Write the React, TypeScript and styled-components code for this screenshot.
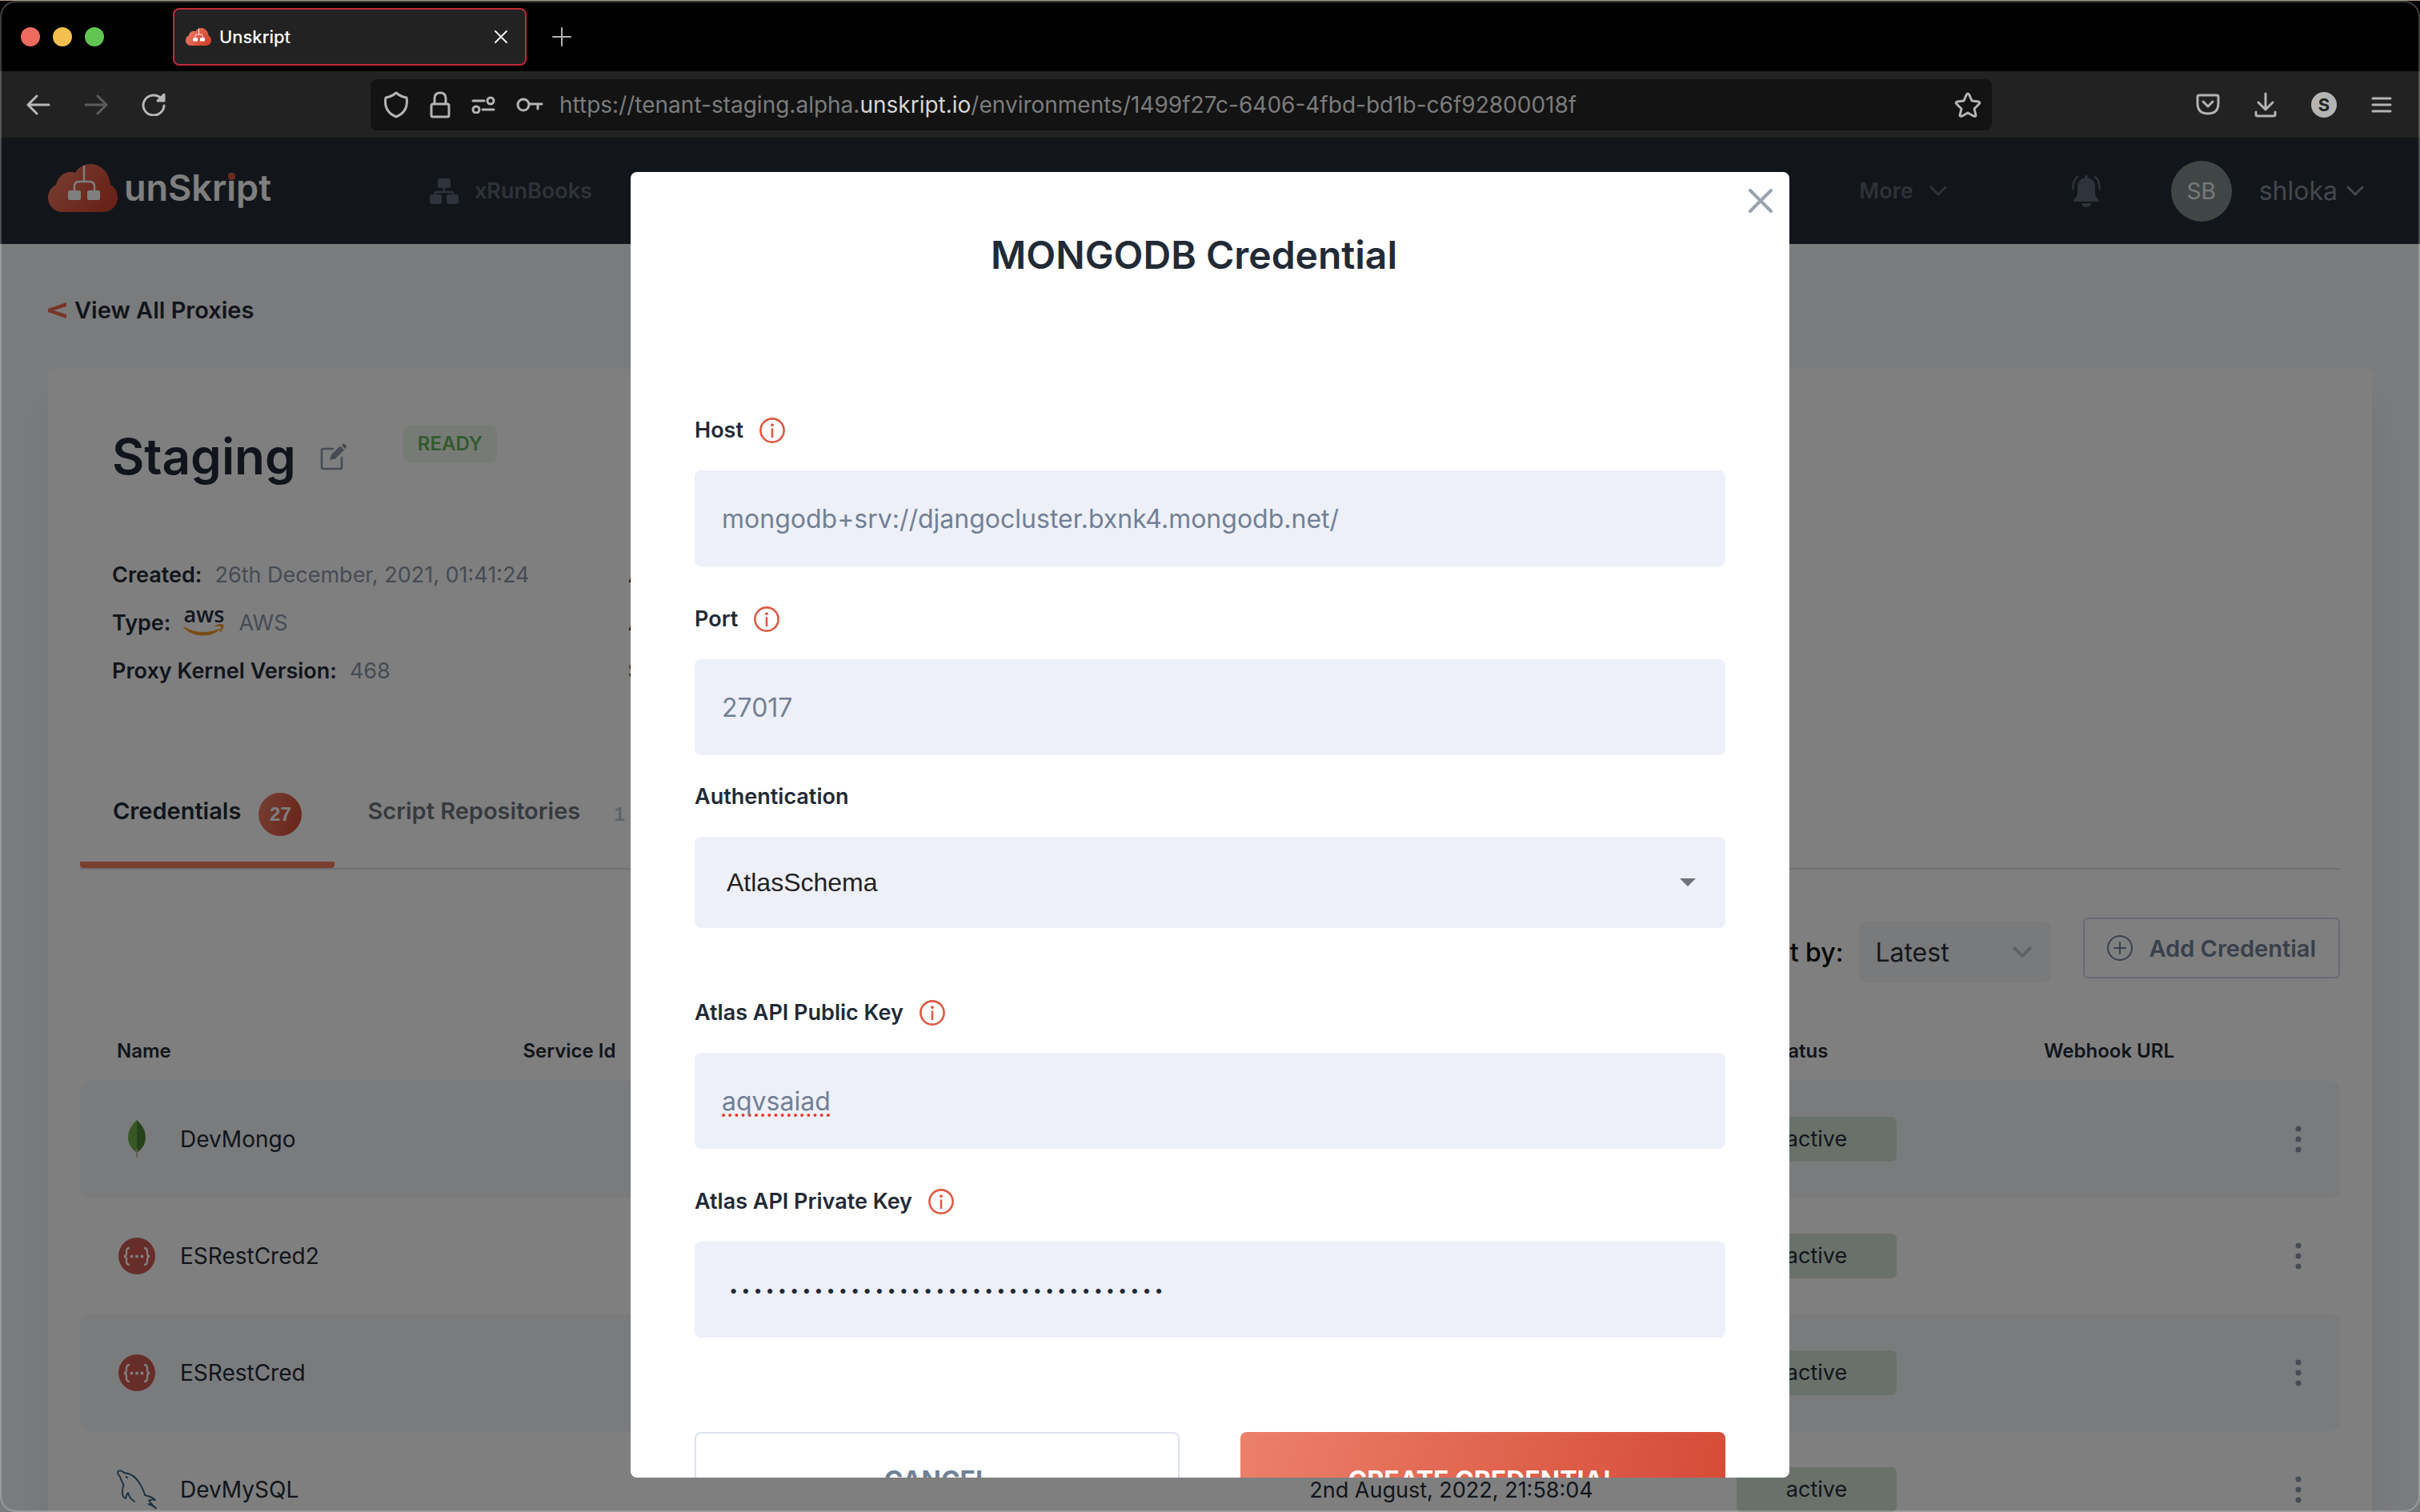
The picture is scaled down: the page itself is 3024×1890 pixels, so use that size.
import React from "react";
import styled, { createGlobalStyle } from "styled-components";

const SANS = `Inter, "Open Sans", sans-serif`;
const HELV = `"Liberation Sans", Arial, sans-serif`;

const GlobalStyle = createGlobalStyle`
  *, *::before, *::after { box-sizing: border-box; }
  html, body { margin: 0; background: #0c0c0c; }
  body { font-family: ${SANS}; color: #222a36; }
  button, input, select { font-family: inherit; margin: 0; }
  button { padding: 0; border: 0; background: none; color: inherit; cursor: pointer; }
  a { color: inherit; text-decoration: none; }
  svg { display: block; flex: none; }
`;

/* ---------- browser window ---------- */

const Browser = styled.div`
  position: relative;
  display: flex;
  flex-direction: column;
  height: 100vh;
  overflow: hidden;
  background: #000;
  border-top: 1px solid #a89a8a;
  &::after {
    content: "";
    position: absolute;
    inset: 0;
    border: 2px solid rgba(255, 255, 255, 0.24);
    border-radius: 20px;
    pointer-events: none;
  }
`;

const TitleBar = styled.div`
  display: flex;
  align-items: center;
  flex: none;
  height: 88px;
  padding: 2px 26px 0;
`;

const Lights = styled.div`
  display: flex;
  gap: 16px;
  margin-right: 86px;
`;

const Light = styled.button<{ $color: string }>`
  width: 24px;
  height: 24px;
  border-radius: 50%;
  background: ${(p) => p.$color};
`;

const BrowserTab = styled.div`
  display: flex;
  align-items: center;
  gap: 10px;
  width: 442px;
  height: 72px;
  padding: 0 22px 0 14px;
  border: 2px solid #c32a3c;
  border-radius: 8px;
  background: #222;
  color: #fff;
  font-size: 22px;
  font-weight: 500;
`;

const Spacer = styled.div`
  flex: 1;
`;

const IconButton = styled.button<{ $color?: string }>`
  display: flex;
  align-items: center;
  justify-content: center;
  color: ${(p) => p.$color ?? "#b4b4b4"};
`;

const NewTab = styled(IconButton)`
  margin-left: 32px;
`;

const NavBar = styled.div`
  display: flex;
  align-items: center;
  flex: none;
  height: 83px;
  padding: 0 35px 0 33px;
  background: #222;
`;

const NavGroup = styled.div`
  display: flex;
  align-items: center;
  gap: 42px;
  width: 430px;
`;

const AddressBar = styled.div`
  display: flex;
  align-items: center;
  gap: 20px;
  flex: 1;
  height: 64px;
  margin-right: 255px;
  padding: 0 13px 0 16px;
  border-radius: 8px;
  background: #131313;
  color: #b4b4b4;
`;

const SiteIcons = styled.div`
  display: flex;
  align-items: center;
  gap: 26px;
`;

const Url = styled.div`
  flex: 1;
  color: #7c7c7c;
  font-size: 28px;
  white-space: nowrap;
  b {
    color: #d6d6d6;
    font-weight: 400;
  }
`;

const Tools = styled.div`
  display: flex;
  align-items: center;
  gap: 43px;
`;

const Account = styled.span`
  display: flex;
  align-items: center;
  justify-content: center;
  width: 32px;
  height: 32px;
  border-radius: 50%;
  background: #b4b4b4;
  color: #222;
  font-size: 22px;
  font-weight: 700;
`;

/* ---------- application page ---------- */

const Viewport = styled.div`
  position: relative;
  flex: 1;
  min-height: 0;
  overflow: hidden;
  background: #f5f7fa;
`;

const Page = styled.div`
  display: flex;
  flex-direction: column;
  height: 100%;
`;

const Header = styled.header`
  display: flex;
  align-items: center;
  flex: none;
  height: 133px;
  padding: 0 70px 0 60px;
  background: #242c36;
  color: #5e6472;
  font-size: 27px;
  font-weight: 600;
`;

const Brand = styled.a`
  display: flex;
  align-items: center;
  gap: 8px;
  width: 477px;
  padding-bottom: 8px;
  color: #fff;
  font-size: 45px;
  font-weight: 600;
`;

const DottedLetter = styled.span`
  position: relative;
  &::after {
    content: "";
    position: absolute;
    left: 50%;
    top: 9px;
    width: 9px;
    height: 9px;
    margin-left: -4px;
    border-radius: 50%;
    background: #e0523a;
  }
`;

const NavLink = styled.a`
  display: flex;
  align-items: center;
  gap: 20px;
`;

const HeaderMenu = styled.button<{ $gap: number; $large?: boolean }>`
  display: flex;
  align-items: center;
  gap: ${(p) => p.$gap}px;
  font-size: ${(p) => (p.$large ? 32 : 27)}px;
  font-weight: ${(p) => (p.$large ? 400 : 600)};
  color: ${(p) => (p.$large ? "#888e99" : "#5e6472")};
`;

const Bell = styled(IconButton)`
  margin: 0 88px 0 156px;
`;

const Avatar = styled.span`
  display: flex;
  align-items: center;
  justify-content: center;
  width: 76px;
  height: 76px;
  margin-right: 34px;
  border-radius: 50%;
  background: #808c8a;
  color: #f0f4f4;
  font-size: 28px;
  font-weight: 400;
`;

const Content = styled.main`
  display: flex;
  flex-direction: column;
  flex: 1;
  padding: 63px 60px 0;
`;

const BackLink = styled.a`
  display: flex;
  align-items: center;
  gap: 10px;
  align-self: flex-start;
  margin-bottom: 53px;
  font-size: 29px;
  line-height: 40px;
  font-weight: 600;
`;

const Card = styled.section`
  flex: 1;
  padding: 70px 40px 0;
  border-radius: 6px;
  background: #fff;
  box-shadow: 0 40px 50px rgba(34, 42, 54, 0.06);
`;

const TitleRow = styled.div`
  display: flex;
  padding-left: 40px;
`;

const PageTitle = styled.h1`
  margin: 0 30px 0 0;
  font-size: 62px;
  line-height: 80px;
  font-weight: 600;
`;

const EditButton = styled(IconButton)`
  height: 80px;
  margin-right: 70px;
`;

const ReadyTag = styled.span`
  height: 48px;
  padding: 0 18px;
  border-radius: 8px;
  background: #eef6eb;
  color: #66b561;
  font-size: 24px;
  line-height: 48px;
  font-weight: 600;
`;

const Meta = styled.dl`
  display: grid;
  grid-template-columns: 645px 1fr;
  margin: 78px 0 122px;
  padding-left: 40px;
  font-size: 27px;
  line-height: 60px;
`;

const MetaItem = styled.div`
  display: flex;
  align-items: center;
  height: 60px;
  gap: 16px;
  dt {
    font-weight: 600;
  }
  dd {
    display: flex;
    align-items: center;
    gap: 18px;
    margin: 0;
    color: #8c97a8;
  }
`;

const AwsMark = styled.span`
  display: flex;
  flex-direction: column;
  align-items: center;
  padding-bottom: 6px;
  color: #252f3e;
  font-family: "Open Sans", sans-serif;
  font-size: 27px;
  line-height: 22px;
  font-weight: 600;
`;

const Tabs = styled.div`
  display: flex;
  border-bottom: 2px solid #dcdfee;
`;

const Tab = styled.button<{ $active?: boolean }>`
  display: flex;
  align-items: flex-start;
  gap: 22px;
  padding: 0 41px 32px;
  border-bottom: 8px solid ${(p) => (p.$active ? "#f4805f" : "transparent")};
  border-radius: 4px;
  color: ${(p) => (p.$active ? "#222a36" : "#6e747e")};
  font-size: 29px;
  line-height: 46px;
  font-weight: 600;
`;

const Count = styled.span<{ $active?: boolean }>`
  width: 54px;
  height: 54px;
  border-radius: 50%;
  background: ${(p) => (p.$active ? "linear-gradient(110deg, #ec8068, #d44630)" : "none")};
  color: ${(p) => (p.$active ? "#fff" : "#bcc4cc")};
  font-family: ${HELV};
  font-size: 24px;
  line-height: 54px;
`;

const Controls = styled.div`
  display: flex;
  justify-content: flex-end;
  height: 81px;
  margin: 60px 0 48px;
`;

const SortLabel = styled.label`
  display: flex;
  align-items: center;
  align-self: flex-end;
  gap: 20px;
  height: 76px;
  margin-right: 40px;
  color: #000;
  font-size: 32px;
  font-weight: 500;
`;

const SelectWrap = styled.span<{ $width: string }>`
  display: grid;
  align-items: center;
  width: ${(p) => p.$width};
  & > * {
    grid-area: 1 / 1;
  }
  & > svg {
    justify-self: end;
    pointer-events: none;
  }
`;

const SortSelect = styled.select`
  appearance: none;
  width: 100%;
  height: 76px;
  padding: 0 20px;
  border: 0;
  border-radius: 8px;
  background: #f2f4f9;
  color: #2c2f35;
  font-size: 32px;
`;

const SortArrow = styled.svg`
  margin-right: 24px;
`;

const AddButton = styled.button`
  display: flex;
  align-items: center;
  align-self: flex-start;
  gap: 20px;
  height: 76px;
  padding: 0 28px;
  border: 2px solid #cfd4e6;
  border-radius: 6px;
  color: #718096;
  font-size: 29px;
  font-weight: 600;
`;

const Table = styled.table`
  width: 100%;
  table-layout: fixed;
  border-spacing: 0;
  text-align: left;
  font-size: 27px;
`;

const Col = styled.col<{ $width: string }>`
  width: ${(p) => p.$width};
`;

const HeadCell = styled.th<{ $inset?: number }>`
  height: 75px;
  padding: 0 0 0 ${(p) => p.$inset ?? 0}px;
  font-size: 24px;
  font-weight: 600;
`;

const Row = styled.tr`
  &:nth-child(odd) td {
    background: #f4f7fb;
  }
`;

const Cell = styled.td`
  height: 146px;
  padding: 0;
  white-space: nowrap;
  &:first-child {
    border-radius: 10px 0 0 10px;
  }
  &:last-child {
    border-radius: 0 10px 10px 0;
  }
`;

const NameCell = styled.div`
  display: flex;
  align-items: center;
  gap: 31px;
  padding-left: 48px;
  font-size: 28px;
`;

const IconSlot = styled.span`
  display: flex;
  justify-content: center;
  width: 46px;
`;

const Status = styled.span`
  display: block;
  width: 200px;
  height: 56px;
  border-radius: 6px;
  background: #d5e3d5;
  line-height: 56px;
  text-align: center;
`;

/* ---------- dialog ---------- */

const Backdrop = styled.div`
  position: absolute;
  inset: 0;
  display: flex;
  justify-content: center;
  padding: 43px 0;
  background: rgba(0, 0, 0, 0.5);
`;

const Dialog = styled.div`
  position: relative;
  width: 100%;
  max-width: 1448px;
  overflow: hidden;
  padding: 74px 80px 0;
  border-radius: 8px;
  background: #fff;
`;

const CloseButton = styled(IconButton)`
  position: absolute;
  top: 20px;
  right: 20px;
`;

const DialogTitle = styled.h2`
  margin: 0 0 173px;
  padding-right: 40px;
  font-size: 48px;
  line-height: 60px;
  font-weight: 600;
  text-align: center;
`;

const Field = styled.div<{ $after: number }>`
  display: flex;
  flex-direction: column;
  gap: 34px;
  margin-bottom: ${(p) => p.$after}px;
`;

const FieldLabel = styled.label`
  display: flex;
  align-items: center;
  gap: 20px;
  font-size: 27px;
  line-height: 32px;
  font-weight: 600;
`;

const Input = styled.input<{ $misspelt?: boolean }>`
  width: 100%;
  height: 120px;
  padding: 0 34px;
  border: 0;
  border-radius: 8px;
  background: #edf0f8;
  color: #718096;
  font-size: 32px;
  text-decoration: ${(p) => (p.$misspelt ? "underline dotted #e8382e 4px" : "none")};
  text-underline-offset: 5px;
  text-decoration-skip-ink: none;
  &[type="password"] {
    padding: 0 41px;
    color: #222a36;
    font-size: 27px;
    font-weight: 200;
  }
`;

const AuthSelect = styled.select`
  appearance: none;
  width: 100%;
  height: 114px;
  padding: 0 40px;
  border: 0;
  border-radius: 8px;
  background: #edf0f8;
  color: #222;
  font-family: ${HELV};
  font-size: 32px;
`;

const AuthArrow = styled.svg`
  margin-right: 37px;
`;

const Actions = styled.div`
  display: grid;
  grid-template-columns: 1fr 1fr;
  gap: 76px;
`;

const ActionButton = styled.button<{ $primary?: boolean }>`
  height: 120px;
  border: ${(p) => (p.$primary ? "0" : "2px solid #dde2f0")};
  border-radius: 8px;
  background: ${(p) => (p.$primary ? "linear-gradient(105deg, #ec806a, #d54a35)" : "#fff")};
  color: ${(p) => (p.$primary ? "#fff" : "#718096")};
  font-size: 32px;
  font-weight: 700;
`;

/* ---------- drawings ---------- */

type LineProps = { w: number; h: number; sw?: number; d: string; className?: string };

const Line = ({ w, h, sw = 3, d, className }: LineProps) => (
  <svg className={className} width={w} height={h} viewBox={`0 0 ${w} ${h}`} fill="none" stroke="currentColor" strokeWidth={sw} strokeLinecap="round" strokeLinejoin="round" aria-hidden="true">
    <path d={d} />
  </svg>
);

const Cloud = ({ width, id }: { width: number; id: string }) => (
  <svg width={width} height={(width * 60) / 87} viewBox="0 0 87 60" aria-hidden="true">
    <defs>
      <linearGradient id={id} x1="0" y1="0" x2="1" y2="0.5">
        <stop offset="0" stopColor="#f08268" />
        <stop offset="1" stopColor="#d34530" />
      </linearGradient>
    </defs>
    <path fill={`url(#${id})`} d="M18 60C8 60 0 52 0 42c0-7 4-13 10-16C12 17 19 10 28 10c2 0 5 0 6 1C38 4 45 0 53 0c13 0 24 11 25 26 6 3 9 9 9 16 0 10-8 18-18 18Z" />
    <path d="M45 2v20M33 34v-6q0-6 6-6h13q6 0 6 6v6" fill="none" stroke="#fff" strokeWidth="2.4" />
    <rect x="25" y="33" width="16" height="12" rx="2" fill="#fff" />
    <rect x="49" y="33" width="16" height="12" rx="2" fill="#fff" />
  </svg>
);

const Info = () => (
  <svg width="32" height="32" viewBox="0 0 32 32" fill="none" stroke="#dd5a43" strokeLinecap="round" aria-hidden="true">
    <circle cx="16" cy="16" r="14.6" strokeWidth="2.6" />
    <path d="M16 14.5v9.5" strokeWidth="2.6" />
    <circle cx="16" cy="9.2" r="1.9" fill="#dd5a43" stroke="none" />
  </svg>
);

const Sitemap = () => (
  <svg width="36" height="32" viewBox="0 0 36 32" fill="#5e6677" aria-hidden="true">
    <rect x="10" y="0" width="16" height="12" rx="3" />
    <rect x="0" y="20" width="15" height="12" rx="3" />
    <rect x="21" y="20" width="15" height="12" rx="3" />
    <path d="M18 12v5M7 21v-2q0-2 2-2h18q2 0 2 2v2" fill="none" stroke="#5e6677" strokeWidth="2.4" />
  </svg>
);

const BellIcon = () => (
  <svg width="36" height="40" viewBox="0 0 36 40" fill="#5e6677" aria-hidden="true">
    <path d="M18 0c1.5 0 2 1 2 3.5C26 4 29 9 29 15v7c0 4 2 6 4 8 2 1.5 1 3-1 3H4c-2 0-3-1.5-1-3 2-2 4-4 4-8v-7C7 9 10 4 16 3.5 16 1 16.5 0 18 0Z" />
    <path d="M12 35h12q-1 5-6 5t-6-5Z" />
    <path d="M7 2Q1 7 1.5 17M29 2q6 5 5.5 15" fill="none" stroke="#5e6677" strokeWidth="2.6" strokeLinecap="round" />
  </svg>
);

const EditIcon = () => (
  <svg width="34" height="34" viewBox="0 0 34 34" fill="none" stroke="#8c97a8" strokeWidth="2.6" strokeLinecap="round" aria-hidden="true">
    <path d="M16 7H4q-2 0-2 2v21q0 2 2 2h21q2 0 2-2V18" />
    <path d="M12 21l2-7L25 3.5l5 5L19 19.5Z" fill="#8c97a8" stroke="none" />
    <path d="M27 2.5l1.5-1.5q1-1 2.5.5l1.5 1.5q1 1.5 0 2.500L31 7Z" fill="#8c97a8" stroke="none" />
  </svg>
);

const Smile = () => (
  <svg width="51" height="17" viewBox="0 0 51 17" aria-hidden="true">
    <path d="M0 5.5Q0 4 2 5q20 11 43 2 2-.5 1 1-9 7.500-21 7.500Q11 16 0 5.5Z" fill="#f49a2a" />
    <path d="M40 3q5-3 10-1.500 2 3-3.500 10-1.500.5-1-1Q48 5 47 4.200 45 3.500 41 4q-2 .2-1-1Z" fill="#f49a2a" />
  </svg>
);

const Leaf = () => (
  <svg width="46" height="48" viewBox="0 0 46 48" aria-hidden="true">
    <path d="M23 0q-11 10-11 22 0 11 11 19Z" fill="#6fae4a" />
    <path d="M23 0q11 10 11 22 0 11-11 19Z" fill="#4a8436" />
    <path d="M23 36v11" stroke="#b9b5a6" strokeWidth="1.6" />
  </svg>
);

const Swagger = () => (
  <svg width="46" height="46" viewBox="0 0 46 46" fill="none" stroke="#fff" strokeWidth="2.4" aria-hidden="true">
    <circle cx="23" cy="23" r="23" fill="#cf5a52" stroke="none" />
    <path d="M14 13q-4 0-4 4v3q0 3-3 3.500 3 .5 3 3.500v3q0 4 4 4M32 13q4 0 4 4v3q0 3 3 3.500-3 .5-3 3.500v3q0 4-4 4" />
    <g fill="#fff" stroke="none">
      <circle cx="16.5" cy="23.5" r="2" />
      <circle cx="23" cy="23.5" r="2" />
      <circle cx="29.5" cy="23.5" r="2" />
    </g>
  </svg>
);

const Dolphin = () => (
  <svg width="50" height="50" viewBox="0 0 50 50" fill="none" stroke="#2c5f80" strokeWidth="1.8" strokeLinecap="round" strokeLinejoin="round" aria-hidden="true">
    <path d="M22 40Q16 36 14 29q-2 2-3 7-5-2-4-10 .5-5 1.500-7Q6 15 4 9 1 6 1 3 3 0 7 2.500q2 2 5 2Q22 6 29 18q5 9 6 14 9 2 13 6-4-1-8 .5Q43 43 49 48.500 44 44 39.500 43" />
    <path d="M11.5 8.500l1.500 2" />
  </svg>
);

const Kebab = () => (
  <svg width="8" height="34" viewBox="0 0 8 34" fill="#8c97a8" aria-hidden="true">
    <circle cx="4" cy="4" r="3.5" />
    <circle cx="4" cy="17" r="3.5" />
    <circle cx="4" cy="30" r="3.5" />
  </svg>
);

const ICONS = { leaf: Leaf, swagger: Swagger, dolphin: Dolphin };

type Credential = { name: string; icon: keyof typeof ICONS; created?: string };

const CREDENTIALS: Credential[] = [
  { name: "DevMongo", icon: "leaf" },
  { name: "ESRestCred2", icon: "swagger" },
  { name: "ESRestCred", icon: "swagger" },
  { name: "DevMySQL", icon: "dolphin", created: "2nd August, 2022, 21:58:04" },
];

const BrowserChrome = () => (
  <>
    <TitleBar>
      <Lights>
        <Light $color="#ec6a5e" aria-label="Close window" />
        <Light $color="#f4bf4f" aria-label="Minimize window" />
        <Light $color="#61c554" aria-label="Zoom window" />
      </Lights>
      <BrowserTab>
        <Cloud width={32} id="favicon" />
        Unskript
        <Spacer />
        <IconButton $color="#f0f0f0" aria-label="Close tab">
          <Line w={16} h={16} sw={2} d="M1 1l14 14M15 1L1 15" />
        </IconButton>
      </BrowserTab>
      <NewTab aria-label="New tab">
        <Line w={24} h={24} sw={2} d="M12 1v22M1 12h22" />
      </NewTab>
    </TitleBar>
    <NavBar>
      <NavGroup>
        <IconButton $color="#b8b8b8" aria-label="Back">
          <Line w={30} h={26} d="M2 13h26M13 2L2 13l11 11" />
        </IconButton>
        <IconButton $color="#5c5c5c" aria-label="Forward">
          <Line w={30} h={26} d="M28 13H2M17 2l11 11-11 11" />
        </IconButton>
        <IconButton $color="#b8b8b8" aria-label="Reload">
          <Line w={30} h={28} d="M28 15A13 12.5 0 1 1 22 4l5 5M28 1v8h-8ZM26 3v5h-4" />
        </IconButton>
      </NavGroup>
      <AddressBar>
        <SiteIcons>
          <Line w={32} h={34} d="M16 2Q22 7 29 8c2 12-3 20-13 24C6 28 1 20 3 8q7-1 13-6Z" />
          <Line w={26} h={34} d="M6 16V9q0-7 7-7t7 7v7M4 16h18q2 0 2 2v12q0 2-2 2H4q-2 0-2-2V18q0-2 2-2Z" />
          <Line w={30} h={22} d="M2 6h14M20 6a4 4 0 1 0 8 0 4 4 0 1 0-8 0M28 17H14M2 17a4 4 0 1 0 8 0 4 4 0 1 0-8 0" />
          <Line w={34} h={20} d="M2 10a7 7 0 1 0 14 0 7 7 0 1 0-14 0M16 9h16M27 9v6" />
        </SiteIcons>
        <Url>
          https://tenant-staging.alpha.<b>unskript.io</b>/environments/1499f27c-6406-4fbd-bd1b-c6f92800018f
        </Url>
        <IconButton aria-label="Bookmark this page">
          <Line w={34} h={32} d="M17 2q1 0 2 2l3 7 8 1q3 1 1 3l-6 6 2 8q0 2-3 1l-7-4-7 4q-3 1-3-1l2-8-6-6q-2-2 1-3l8-1 3-7q1-2 2-2Z" />
        </IconButton>
      </AddressBar>
      <Tools>
        <IconButton aria-label="Save to Pocket">
          <Line w={30} h={27} d="M4 2h22q2 0 2 2v8q0 13-13 13T2 12V4q0-2 2-2ZM9 10l6 6 6-6" />
        </IconButton>
        <IconButton aria-label="Downloads">
          <Line w={28} h={32} d="M14 2v20M5 13l9 9 9-9M2 25v3q0 2 2 2h20q2 0 2-2v-3" />
        </IconButton>
        <Account>S</Account>
        <IconButton aria-label="Open menu">
          <Line w={26} h={20} d="M2 2h22M2 10h22M2 18h22" />
        </IconButton>
      </Tools>
    </NavBar>
  </>
);

const AppHeader = () => (
  <Header>
    <Brand href="#">
      <Cloud width={87} id="brand" />
      <span>
        unSkr<DottedLetter>i</DottedLetter>pt
      </span>
    </Brand>
    <NavLink href="#">
      <Sitemap />
      xRunBooks
    </NavLink>
    <Spacer />
    <HeaderMenu $gap={20}>
      More
      <Line w={22} h={14} d="M2 2l9 9 9-9" />
    </HeaderMenu>
    <Bell aria-label="Notifications">
      <BellIcon />
    </Bell>
    <Avatar>SB</Avatar>
    <HeaderMenu $gap={11} $large>
      shloka
      <Line w={22} h={14} d="M2 2l9 9 9-9" />
    </HeaderMenu>
  </Header>
);

const ProxyPage = () => (
  <Content>
    <BackLink href="#">
      <svg width="23" height="20" viewBox="0 0 23 20" fill="#ee6a50" aria-hidden="true">
        <path d="M23 0v5L7 10l16 5v5L0 12V8Z" />
      </svg>
      View All Proxies
    </BackLink>
    <Card>
      <TitleRow>
        <PageTitle>Staging</PageTitle>
        <EditButton aria-label="Rename proxy">
          <EditIcon />
        </EditButton>
        <ReadyTag>READY</ReadyTag>
      </TitleRow>
      <Meta>
        <MetaItem>
          <dt>Created:</dt>
          <dd>26th December, 2021, 01:41:24</dd>
        </MetaItem>
        <MetaItem>
          <dt>A</dt>
        </MetaItem>
        <MetaItem>
          <dt>Type:</dt>
          <dd>
            <AwsMark>
              aws
              <Smile />
            </AwsMark>
            AWS
          </dd>
        </MetaItem>
        <MetaItem>
          <dt>A</dt>
        </MetaItem>
        <MetaItem>
          <dt>Proxy Kernel Version:</dt>
          <dd>468</dd>
        </MetaItem>
        <MetaItem>
          <dt>S</dt>
        </MetaItem>
      </Meta>
      <Tabs>
        <Tab $active>
          Credentials <Count $active>27</Count>
        </Tab>
        <Tab>
          Script Repositories <Count>1</Count>
        </Tab>
      </Tabs>
      <Controls>
        <SortLabel>
          Sort by:
          <SelectWrap $width="240px">
            <SortSelect defaultValue="Latest">
              <option>Latest</option>
            </SortSelect>
            <SortArrow width="24" height="16" viewBox="0 0 24 16" fill="none" stroke="#c3c5c9" strokeWidth="4">
              <path d="M1 2l11 11L23 2" />
            </SortArrow>
          </SelectWrap>
        </SortLabel>
        <AddButton>
          <Line w={32} h={32} sw={2} d="M1 16a15 15 0 1 0 30 0 15 15 0 1 0-30 0M16 9v14M9 16h14" />
          Add Credential
        </AddButton>
      </Controls>
      <Table>
        <colgroup>
          <Col $width="19.6%" />
          <Col $width="34.8%" />
          <Col $width="18.9%" />
          <Col $width="13.6%" />
          <Col $width="11.1%" />
          <Col $width="2%" />
        </colgroup>
        <thead>
          <tr>
            <HeadCell $inset={46}>Name</HeadCell>
            <HeadCell>Service Id</HeadCell>
            <HeadCell />
            <HeadCell $inset={40}>Status</HeadCell>
            <HeadCell>Webhook URL</HeadCell>
            <HeadCell />
          </tr>
        </thead>
        <tbody>
          {CREDENTIALS.map((c) => {
            const Icon = ICONS[c.icon];
            return (
              <Row key={c.name}>
                <Cell>
                  <NameCell>
                    <IconSlot>
                      <Icon />
                    </IconSlot>
                    {c.name}
                  </NameCell>
                </Cell>
                <Cell />
                <Cell>{c.created}</Cell>
                <Cell>
                  <Status>active</Status>
                </Cell>
                <Cell />
                <Cell>
                  <IconButton aria-label={`Actions for ${c.name}`}>
                    <Kebab />
                  </IconButton>
                </Cell>
              </Row>
            );
          })}
        </tbody>
      </Table>
    </Card>
  </Content>
);

const CredentialDialog = () => (
  <Backdrop>
    <Dialog role="dialog" aria-modal="true" aria-labelledby="dialog-title">
      <CloseButton $color="#98a2b3" aria-label="Close dialog">
        <Line w={32} h={32} sw={4} d="M3 3l26 26M29 3L3 29" />
      </CloseButton>
      <DialogTitle id="dialog-title">MONGODB Credential</DialogTitle>
      <Field $after={50}>
        <FieldLabel htmlFor="host">
          Host <Info />
        </FieldLabel>
        <Input id="host" defaultValue="mongodb+srv://djangocluster.bxnk4.mongodb.net/" />
      </Field>
      <Field $after={36}>
        <FieldLabel htmlFor="port">
          Port <Info />
        </FieldLabel>
        <Input id="port" defaultValue="27017" />
      </Field>
      <Field $after={90}>
        <FieldLabel htmlFor="authentication">Authentication</FieldLabel>
        <SelectWrap $width="100%">
          <AuthSelect id="authentication" defaultValue="AtlasSchema">
            <option>AtlasSchema</option>
          </AuthSelect>
          <AuthArrow width="20" height="10" viewBox="0 0 20 10" fill="#6f7276">
            <path d="M0 0h20L10 10Z" />
          </AuthArrow>
        </SelectWrap>
      </Field>
      <Field $after={50}>
        <FieldLabel htmlFor="public-key">
          Atlas API Public Key <Info />
        </FieldLabel>
        <Input id="public-key" $misspelt defaultValue="aqvsaiad" />
      </Field>
      <Field $after={118}>
        <FieldLabel htmlFor="private-key">
          Atlas API Private Key <Info />
        </FieldLabel>
        <Input id="private-key" type="password" defaultValue={"x".repeat(36)} />
      </Field>
      <Actions>
        <ActionButton>CANCEL</ActionButton>
        <ActionButton $primary>CREATE CREDENTIAL</ActionButton>
      </Actions>
    </Dialog>
  </Backdrop>
);

export default function App() {
  return (
    <Browser>
      <GlobalStyle />
      <BrowserChrome />
      <Viewport>
        <Page>
          <AppHeader />
          <ProxyPage />
        </Page>
        <CredentialDialog />
      </Viewport>
    </Browser>
  );
}
